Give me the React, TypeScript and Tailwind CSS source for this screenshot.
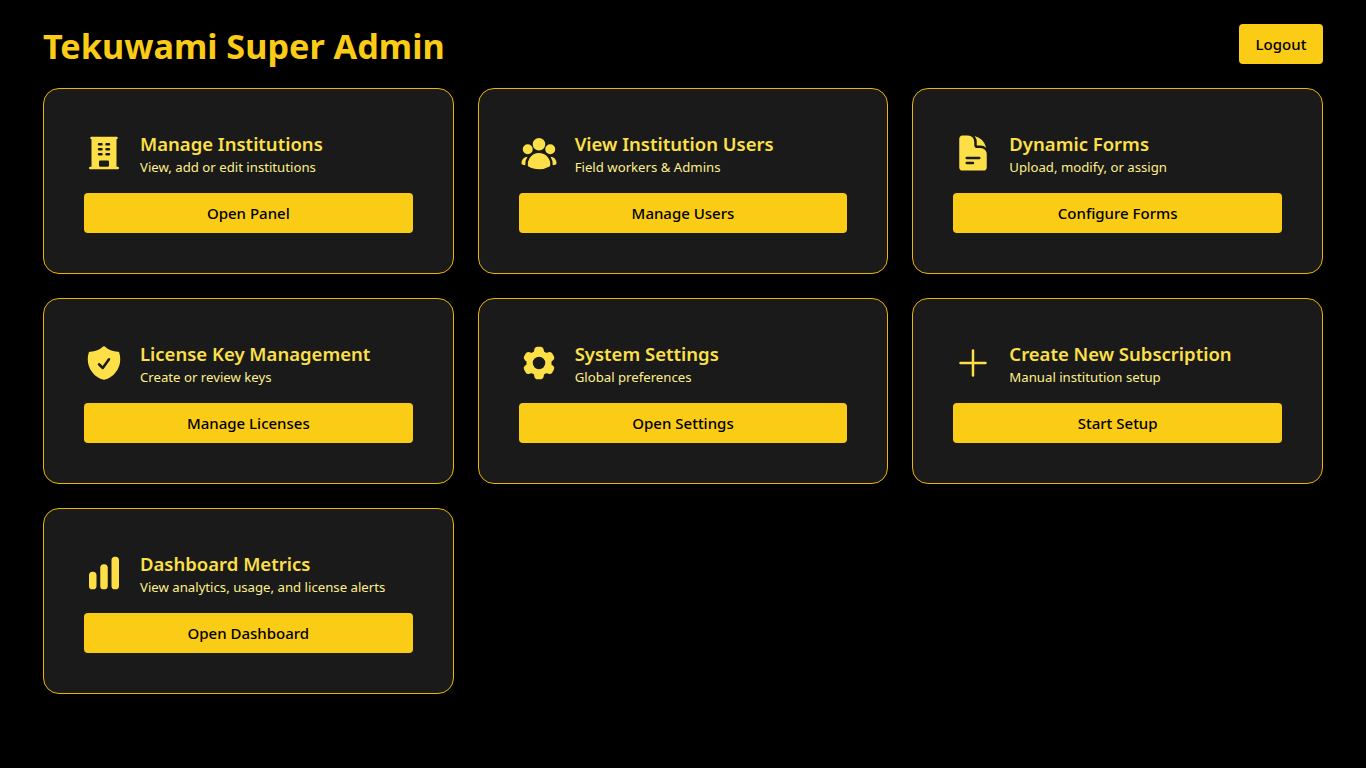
import React from "react";
import {
  HiBuildingOffice,
  HiUserGroup,
  HiDocumentText,
  HiShieldCheck,
  HiCog6Tooth,
  HiOutlinePlus,
  HiChartBar,
} from "react-icons/hi2";

const cards = [
  { icon: HiBuildingOffice, title: "Manage Institutions", sub: "View, add or edit institutions", action: "Open Panel" },
  { icon: HiUserGroup, title: "View Institution Users", sub: "Field workers & Admins", action: "Manage Users" },
  { icon: HiDocumentText, title: "Dynamic Forms", sub: "Upload, modify, or assign", action: "Configure Forms" },
  { icon: HiShieldCheck, title: "License Key Management", sub: "Create or review keys", action: "Manage Licenses" },
  { icon: HiCog6Tooth, title: "System Settings", sub: "Global preferences", action: "Open Settings" },
  { icon: HiOutlinePlus, title: "Create New Subscription", sub: "Manual institution setup", action: "Start Setup" },
  { icon: HiChartBar, title: "Dashboard Metrics", sub: "View analytics, usage, and license alerts", action: "Open Dashboard" },
];

export default function App() {
  return (
    <div className="min-h-screen bg-black px-[43px] pt-6 font-['Noto_Sans',sans-serif]">
      <div className="mx-auto max-w-7xl">
        <div className="mb-6 flex h-10 items-center justify-between">
          <h1 className="pt-1 text-[34.2px] leading-10 font-bold text-[#facc15]">Tekuwami Super Admin</h1>
          <button className="h-10 w-[84px] rounded bg-[#facc15] pt-px text-[15px] font-medium text-black">Logout</button>
        </div>
        <div className="grid grid-cols-3 gap-6">
          {cards.map(({ icon: Icon, title, sub, action }) => (
            <div key={title} className="rounded-2xl border border-[#eab308] bg-[#1a1a1a] p-10">
              <div className="mb-4 flex items-center gap-4">
                <Icon className="h-10 w-10 shrink-0 text-[#fde047]" />
                <div>
                  <h2 className="pt-px text-[18.5px] leading-[27px] font-semibold text-[#fde047]">{title}</h2>
                  <p className="text-[13.2px] leading-5 text-[#fef08a]">{sub}</p>
                </div>
              </div>
              <button className="h-10 w-full rounded bg-[#facc15] pt-px text-[15px] font-medium text-black">{action}</button>
            </div>
          ))}
        </div>
      </div>
    </div>
  );
}
